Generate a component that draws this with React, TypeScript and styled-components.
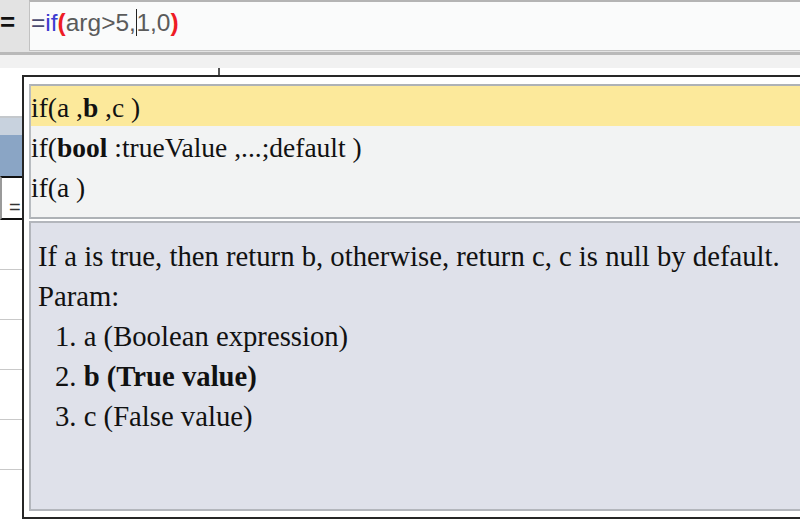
import styled, {createGlobalStyle} from "styled-components";

const GlobalStyle = createGlobalStyle`
    html, body {
        margin: 0;
        padding: 0;
        background: #fff;
    }
`

const Page = styled.div`
    position: relative;
    width: 800px;
    height: 520px;
    overflow: hidden;
    background: #fff;
    font-family: "Liberation Serif", "Times New Roman", serif;
`

const FormulaBar = styled.div`
    display: flex;
    height: 52px;
    background: #e3e3e3;
    border-bottom: 3px solid #b9b9b9;
`

const EqLabel = styled.div`
    width: 29px;
    flex: none;
    font-family: "Liberation Sans", Arial, sans-serif;
    font-weight: bold;
    font-size: 26px;
    line-height: 44px;
    color: #111;
`

const FormulaInput = styled.div`
    flex: 1;
    box-sizing: border-box;
    height: 51px;
    background: #fafbfb;
    border: 1px solid #c2c2c2;
    border-top: 2px solid #b4b4b4;
    border-right: none;
    padding-left: 1px;
    font-family: "Liberation Sans", Arial, sans-serif;
    font-size: 24.5px;
    line-height: 41px;
    color: #5a5a5a;
    white-space: nowrap;
`

const Tok = styled.span<{ $kind: "eq" | "fn" | "paren" | "arg" }>`
    color: ${p => p.$kind === "fn" ? "#3b3bd0" : p.$kind === "paren" ? "#ee1c25" : p.$kind === "eq" ? "#4a4a70" : "#5b5b5b"};
    font-weight: ${p => p.$kind === "paren" ? "bold" : "normal"};
`

const Caret = styled.span`
    display: inline-block;
    width: 1.5px;
    height: 27px;
    background: #222;
    vertical-align: -5px;
    margin: 0 -1px 0 0;
`

const Ruler = styled.div`
    display: flex;
    flex-direction: column;
`

const RulerBand = styled.div`
    height: 13px;
    background: #f1f1f1;
`

const RulerTicks = styled.div`
    height: 7px;
    background: #fff;
`

const Tick = styled.div`
    width: 218px;
    height: 7px;
    border-right: 2px solid #555;
`

const Grid = styled.div`
    display: flex;
    flex-direction: column;
    width: 22px;
`

const Spacer = styled.div<{ $h: number }>`
    height: ${p => p.$h}px;
    background: #fff;
    border-bottom: 2px solid #c4c8cc;
`

const GroupBand = styled.div<{ $h: number; $bg: string }>`
    height: ${p => p.$h}px;
    background: ${p => p.$bg};
`

const ActiveCell = styled.div`
    height: 40px;
    border-top: 2px solid #111;
    border-bottom: 2px solid #111;
    border-left: 2px solid #9a9a9a;
    box-sizing: content-box;
    font-family: "Liberation Sans", Arial, sans-serif;
    font-size: 20px;
    line-height: 58px;
    padding-left: 7px;
    color: #333;
`

const GridRow = styled.div`
    height: 49px;
    border-bottom: 1px solid #c9c9c9;
`

const Popup = styled.div`
    position: absolute;
    left: 22px;
    top: 75px;
    right: -10px;
    bottom: 1px;
    display: flex;
    flex-direction: column;
    gap: 2px;
    background: #fff;
    border: 2px solid #262626;
    padding: 7px 0 6px 5px;
    color: #111;
`

const SuggestList = styled.div`
    height: 131px;
    background: #f2f3f3;
    border-top: 2px solid #aeb2b6;
    border-bottom: 2px solid #aeb2b6;
    border-left: 2px solid #b8bcc0;
    flex: none;
`

const Suggest = styled.div<{ $active?: boolean }>`
    height: 37px;
    padding-top: 3px;
    line-height: 37px;
    font-size: 27.5px;
    white-space: nowrap;
    background: ${p => p.$active ? "#fce99b" : "transparent"};
`

const Description = styled.div`
    flex: 1;
    background: #dfe1ea;
    border: 2px solid #b3b6bc;
    border-right: none;
    padding: 13px 0 0 7px;
    font-size: 28.7px;
    line-height: 40px;
    white-space: nowrap;
`

const ParamItem = styled.div`
    padding-left: 17px;
`

export default function App(){

    const suggestions = [
        <>if(a ,<b>b</b> ,c )</>,
        <>if(<b>bool</b> :trueValue ,...;default )</>,
        <>if(a )</>,
    ]

    return <Page>
        <GlobalStyle/>
        <FormulaBar>
            <EqLabel>=</EqLabel>
            <FormulaInput>
                <Tok $kind="eq">=</Tok>
                <Tok $kind="fn">if</Tok>
                <Tok $kind="paren">(</Tok>
                <Tok $kind="arg">arg&gt;5,</Tok>
                <Caret/>
                <Tok $kind="arg">1,0</Tok>
                <Tok $kind="paren">)</Tok>
            </FormulaInput>
        </FormulaBar>

        <Ruler>
            <RulerBand/>
            <RulerTicks><Tick/></RulerTicks>
        </Ruler>

        <Grid>
            <Spacer $h={41}/>
            <GroupBand $h={17} $bg="#c8d2de"/>
            <GroupBand $h={41} $bg="#8aa5c5"/>
            <ActiveCell>=</ActiveCell>
            <GridRow/>
            <GridRow/>
            <GridRow/>
            <GridRow/>
            <GridRow/>
        </Grid>

        <Popup>
            <SuggestList>
                {
                    suggestions.map((s, i) => <Suggest key={i} $active={i === 0}>{s}</Suggest>)
                }
            </SuggestList>
            <Description>
                <div>If a is true, then return b, otherwise, return c, c is null by default.</div>
                <div>Param:</div>
                <ParamItem>1. a (Boolean expression)</ParamItem>
                <ParamItem>2. <b>b (True value)</b></ParamItem>
                <ParamItem>3. c (False value)</ParamItem>
            </Description>
        </Popup>
    </Page>
}
